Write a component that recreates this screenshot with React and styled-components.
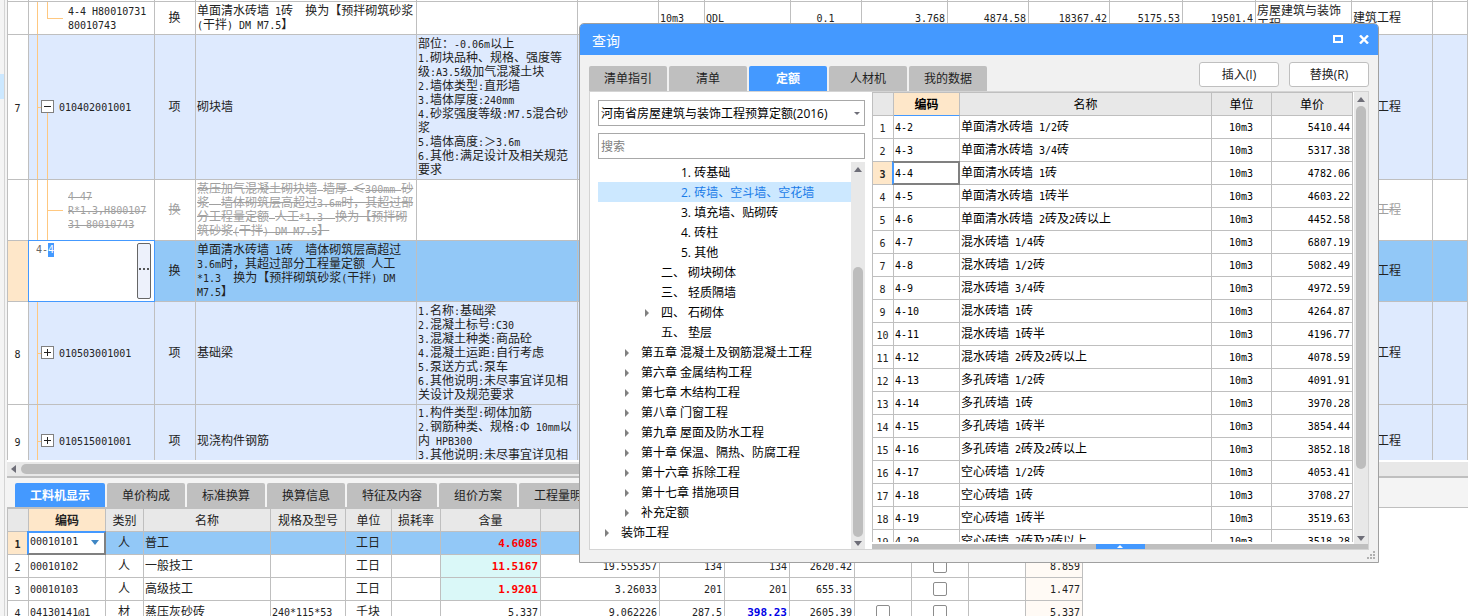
import React, { useLayoutEffect, useRef } from 'react';
import styled, { createGlobalStyle, css } from 'styled-components';

const c = {
  blue: '#4499ff',
  line: '#bfbfbf',
  pale: '#f4f4f4',
  track: '#e8e8e8',
  text: '#222222',
  peach: '#fee7c9',
  rowBlue: '#deeafe',
  rowActive: '#92c8f7',
};

const song = '"Noto Sans CJK SC", sans-serif';
const ui = '"Open Sans", "Noto Sans CJK SC", sans-serif';

const GlobalStyle = createGlobalStyle`
  * { box-sizing: border-box; }
  body { margin: 0; background: #fff; color: ${c.text}; font: 12px/14px ${song}; overflow: hidden; }
  button, input, select { font: inherit; color: inherit; }
`;

/* ---------- text: full-width characters with half-width monospaced Latin ---------- */

const Run = styled.span`
  text-decoration: ${(p) => (p.$struck ? 'line-through' : 'none')};
`;

const Latin = styled(Run)`
  font-family: "DejaVu Sans Mono", monospace;
  font-size: ${(p) => (p.$large ? 11 : 10)}px;
  line-height: 0;
`;

function Song({ children, large, struck }) {
  return String(children)
    .split(/([\x20-\x7e]+)/)
    .map((run, i) => {
      if (!run) return null;
      return i % 2
        ? <Latin key={i} $large={large} $struck={struck}>{run}</Latin>
        : <Run key={i} $struck={struck}>{run}</Run>;
    });
}

/* ---------- page frame ---------- */

const Page = styled.div`
  position: relative;
  display: flex;
  height: 100vh;
  overflow: hidden;
`;

const SideRail = styled.aside`
  flex: 0 0 7px;
  padding-top: 74px;
  background: linear-gradient(to right, ${c.pale} 4px, #d4d4d4 4px, #d4d4d4 5px, ${c.pale} 5px);
`;

const RailMark = styled.div`
  width: 4px;
  height: 25px;
  background: #cce8ff;
`;

const Main = styled.main`
  flex: 1;
  min-width: 0;
  display: flex;
  flex-direction: column;
`;

const UpperPane = styled.section`
  flex: 0 0 460px;
  overflow: hidden;
`;

const LowerPane = styled.section`
  flex: 1;
  min-height: 0;
  overflow: hidden;
`;

/* ---------- grids ---------- */

const Grid = styled.table`
  table-layout: fixed;
  width: ${(p) => p.$width || '100%'};
  border-collapse: separate;
  border-spacing: 0;
  border-left: 1px solid ${c.line};
  border-top: ${(p) => (p.$topLine ? `1px solid ${c.line}` : 0)};
  color: ${(p) => p.$ink || c.text};
`;

const Row = styled.tr`
  height: ${(p) => p.$h || 23}px;
  background: ${(p) => p.$bg || '#fff'};
`;

const Cell = styled.td`
  position: relative;
  padding: 0 2px 2px 1px;
  border-right: 1px solid ${c.line};
  border-bottom: 1px solid ${c.line};
  white-space: pre;
  overflow: hidden;
  text-align: ${(p) => p.$align || 'left'};
  vertical-align: ${(p) => p.$valign || 'middle'};
  color: ${(p) => p.$color || 'inherit'};
  font-weight: ${(p) => (p.$bold ? 700 : 400)};
  ${(p) => p.$bg && css`background: ${p.$bg};`}
`;

const EdgeCell = styled(Cell)`
  padding: 0;
`;

const HeadCell = styled.th`
  padding: 0;
  border-right: 1px solid ${c.line};
  border-bottom: 1px solid ${(p) => (p.$current ? c.blue : c.line)};
  background: ${(p) => (p.$current ? c.peach : c.track)};
  font-weight: ${(p) => (p.$current ? 700 : 400)};
  white-space: nowrap;
`;

const NumberCell = styled(Cell)`
  padding-bottom: 0;
  text-align: center;
  color: ${c.text};
  background: ${(p) => (p.$current ? c.peach : '#fff')};
  font-weight: ${(p) => (p.$current ? 700 : 400)};
`;

const FocusCell = styled(Cell)`
  background: #fff;
  overflow: visible;
  &::after {
    content: '';
    position: absolute;
    inset: -1px -1px -1px -2px;
    border: 2px solid #808080;
    border-left-color: ${c.blue};
    ${(p) => p.$blueTop && css`border-top-color: ${c.blue};`}
    pointer-events: none;
  }
`;

const Cols = ({ widths }) => (
  <colgroup>
    {widths.map((w, i) => <col key={i} style={w ? { width: w } : undefined} />)}
  </colgroup>
);

/* ---------- tree column of the upper grid ---------- */

const guide = (x, y, w, h) => `linear-gradient(#ffc880, #ffc880) ${x} ${y} / ${w} ${h} no-repeat`;
const guides = {
  last: [guide('8px', '0', '1px', '100%'), guide('18px', '0', '1px', '50%'), guide('18px', '50%', '16px', '1px')],
  child: [guide('8px', '0', '1px', '100%'), guide('18px', '0', '1px', '100%'), guide('18px', '50%', '16px', '1px')],
  open: [guide('8px', '0', '1px', '100%'), guide('18px', '100%', '1px', '50%'), guide('8px', '50%', '5px', '1px')],
  closed: [guide('8px', '0', '1px', '100%'), guide('8px', '50%', '5px', '1px')],
};

const TreeCell = styled(Cell)`
  padding-left: ${(p) => (p.$kind === 'open' || p.$kind === 'closed' ? 12 : 39)}px;
  background: ${(p) => guides[p.$kind].join(', ')};
`;

const NodeLine = styled.div`
  display: flex;
  align-items: center;
  gap: 5px;
`;

const Toggle = styled.button`
  display: grid;
  place-items: center;
  width: 13px;
  height: 13px;
  padding: 0;
  border: 1px solid #808080;
  background: #fff;
`;

const TreeToggle = ({ open }) => (
  <Toggle type="button" aria-label={open ? '折叠' : '展开'}>
    <svg width="7" height="7" viewBox="0 0 7 7" fill="#222" shapeRendering="crispEdges">
      <path d={open ? 'M0 3h7v1H0z' : 'M0 3h7v1H0zM3 0h1v7H3z'} />
    </svg>
  </Toggle>
);

const EditCell = styled(Cell)`
  padding: 0;
  background: #fff;
  overflow: visible;
  &::after {
    content: '';
    position: absolute;
    inset: -1px;
    border: 1px solid ${c.blue};
    pointer-events: none;
  }
`;

const EditLine = styled.div`
  display: flex;
  height: 56px;
  padding-right: 3px;
`;

const CodeInput = styled.input`
  flex: 1;
  min-width: 0;
  height: 14px;
  padding: 0 0 0 7px;
  border: 0;
  outline: 0;
  background: transparent;
  color: #666;
  caret-color: transparent;
  font: 10px/14px "DejaVu Sans Mono", monospace;
  &::selection { background: ${c.blue}; color: #fff; }
`;

const MoreButton = styled.button`
  display: grid;
  place-items: center;
  width: 14px;
  padding: 0 0 4px;
  border: 1px solid #666;
  border-radius: 2px;
  background: #edf1fb;
`;

function CodeEditor() {
  const ref = useRef(null);
  useLayoutEffect(() => {
    ref.current.focus();
    ref.current.setSelectionRange(2, 3);
  }, []);
  return (
    <EditLine>
      <CodeInput ref={ref} defaultValue="4-4" aria-label="编码" />
      <MoreButton type="button" aria-label="更多">
        <svg width="10" height="2" viewBox="0 0 10 2" fill="#555" shapeRendering="crispEdges">
          <path d="M0 0h2v2H0zM4 0h2v2H4zM8 0h2v2H8z" />
        </svg>
      </MoreButton>
    </EditLine>
  );
}

const upperCols = [21, 126, 41, 221, 161, 81, 46, 86, 71, 86, 81, 81, 73, 73, 96, 81, null];

const upperRows = [
  {
    h: 33, kind: 'last', code: '4-4 H80010731\n80010743', type: '换',
    name: '单面清水砖墙 1砖  换为【预拌砌筑砂浆\n(干拌) DM M7.5】',
    values: ['', '10m3', 'QDL', '0.1', '3.768', '4874.58', '18367.42', '5175.53', '19501.4', '房屋建筑与装饰\n工程'],
  },
  {
    h: 145, n: 7, kind: 'open', code: '010402001001', type: '项', name: '砌块墙', bg: c.rowBlue,
    detail: '部位：-0.06m以上\n1.砌块品种、规格、强度等\n级:A3.5级加气混凝土块\n2.墙体类型:直形墙\n3.墙体厚度:240mm\n4.砂浆强度等级:M7.5混合砂\n浆\n5.墙体高度:＞3.6m\n6.其他:满足设计及相关规范\n要求',
  },
  {
    h: 61, kind: 'child', code: '4-47\nR*1.3,H800107\n31 80010743', type: '换', struck: true,
    name: '蒸压加气混凝土砌块墙 墙厚 ≤300mm 砂\n浆  墙体砌筑层高超过3.6m时，其超过部\n分工程量定额 人工*1.3  换为【预拌砌\n筑砂浆(干拌) DM M7.5】',
  },
  {
    h: 61, editing: true, type: '换', bg: c.rowActive,
    name: '单面清水砖墙 1砖  墙体砌筑层高超过\n3.6m时，其超过部分工程量定额 人工\n*1.3  换为【预拌砌筑砂浆(干拌) DM\nM7.5】',
  },
  {
    h: 103, n: 8, kind: 'closed', code: '010503001001', type: '项', name: '基础梁', bg: c.rowBlue,
    detail: '1.名称:基础梁\n2.混凝土标号:C30\n3.混凝土种类:商品砼\n4.混凝土运距:自行考虑\n5.泵送方式:泵车\n6.其他说明:未尽事宜详见相\n关设计及规范要求',
  },
  {
    h: 73, n: 9, kind: 'closed', code: '010515001001', type: '项', name: '现浇构件钢筋', bg: c.rowBlue, top: true,
    detail: '1.构件类型:砌体加筋\n2.钢筋种类、规格:Φ 10mm以\n内 HPB300\n3.其他说明:未尽事宜详见相',
  },
];

const valueAlign = ['left', 'left', 'left', 'center', 'right', 'right', 'right', 'right', 'right', 'left'];

function UpperGrid() {
  return (
    <Grid>
      <Cols widths={upperCols} />
      <tbody>
        <Row $h={2}>{upperCols.map((_, i) => <EdgeCell key={i} />)}</Row>
        {upperRows.map((r, i) => {
          const color = r.struck ? '#a0a0a0' : undefined;
          return (
            <Row key={i} $h={r.h} $bg={r.bg}>
              <NumberCell $current={r.editing}><Song>{r.n ?? ''}</Song></NumberCell>
              {r.editing ? (
                <EditCell><CodeEditor /></EditCell>
              ) : (
                <TreeCell $kind={r.kind} $color={color}>
                  {r.n ? (
                    <NodeLine>
                      <TreeToggle open={r.kind === 'open'} />
                      <span><Song>{r.code}</Song></span>
                    </NodeLine>
                  ) : <Song struck={r.struck}>{r.code}</Song>}
                </TreeCell>
              )}
              <Cell $align="center" $color={color}><Song struck={r.struck}>{r.type}</Song></Cell>
              <Cell $color={color}><Song struck={r.struck}>{r.name}</Song></Cell>
              <Cell $valign={r.top ? 'top' : 'middle'}><Song>{r.detail ?? ''}</Song></Cell>
              {valueAlign.map((a, k) => (
                <Cell key={k} $align={a}><Song>{r.values?.[k] ?? ''}</Song></Cell>
              ))}
              <Cell $color={color}><Song struck={r.struck}>建筑工程</Song></Cell>
              <Cell />
            </Row>
          );
        })}
      </tbody>
    </Grid>
  );
}

/* ---------- scrollbars ---------- */

const Arrow = ({ dir, color = '#6e6e78' }) => {
  const d = { up: 'M0 5L4 0L8 5Z', down: 'M0 0H8L4 5Z', left: 'M5 0V8L0 4Z', right: 'M0 0V8L4 4Z' }[dir];
  const flat = dir === 'up' || dir === 'down';
  return <svg width={flat ? 8 : 5} height={flat ? 5 : 8} fill={color}><path d={d} /></svg>;
};

const HScroll = styled.div`
  display: flex;
  align-items: center;
  gap: 5px;
  flex: 0 0 18px;
  padding: 0 0 0 4px;
  border-top: 2px solid #fff;
  border-bottom: 2px solid ${c.line};
  background: ${c.track};
`;

const HThumb = styled.div`
  width: 1000px;
  height: 10px;
  border-radius: 5px;
  background: #bdbdbd;
`;

const VScroll = styled.div`
  display: flex;
  flex-direction: column;
  align-items: center;
  width: 14px;
  padding: 5px 0 3px;
  background: ${c.track};
`;

const VThumb = styled.div`
  width: 10px;
  height: ${(p) => p.$h}px;
  margin: ${(p) => (p.$end ? 'auto 0 4px' : '4px 0 auto')};
  border-radius: 5px;
  background: #bdbdbd;
`;

/* ---------- tabs ---------- */

const Tabs = styled.div`
  display: flex;
  gap: 2px;
  font-family: ${ui};
`;

const Tab = styled.button`
  height: ${(p) => p.$h || 24}px;
  min-width: 78px;
  padding: 1px 15px 0;
  border: 0;
  border-radius: 2px 2px 0 0;
  background: ${(p) => (p.$active ? c.blue : c.line)};
  color: ${(p) => (p.$active ? '#fff' : c.text)};
  font-weight: ${(p) => (p.$active ? 700 : 400)};
  white-space: nowrap;
`;

const LowerTabs = styled(Tabs)`
  padding: 5px 0 0 8px;
  border-bottom: 1px solid ${c.line};
  background: ${c.pale};
`;

/* ---------- lower grid ---------- */

const lowerCols = [21, 77, 38, 127, 75, 46, 49, 100, 119, 65, 65, 65, 57, 57, 57, 57];
const lowerHeads = ['', '编码', '类别', '名称', '规格及型号', '单位', '损耗率', '含量', '', '', '', '', '', '', '', ''];

const lowerRows = [
  { code: '00010101', kind: '人', name: '普工', unit: '工日', qty: '4.6085', hot: true },
  { code: '00010102', kind: '人', name: '一般技工', unit: '工日', qty: '11.5167', hot: true, nums: ['19.555357', '134', '134', '2620.42'], checks: [false, true], total: '8.859' },
  { code: '00010103', kind: '人', name: '高级技工', unit: '工日', qty: '1.9201', hot: true, nums: ['3.26033', '201', '201', '655.33'], checks: [false, true], total: '1.477' },
  { code: '04130141@1', kind: '材', name: '蒸压灰砂砖', spec: '240*115*53', unit: '千块', qty: '5.337', nums: ['9.062226', '287.5', '398.23', '2605.39'], checks: [true, true], total: '5.337', market: true },
];

const CodeSelectBox = styled.label`
  display: flex;
  align-items: center;
  padding-right: 4px;
`;

const CodeSelect = styled.select`
  appearance: none;
  flex: 1;
  min-width: 0;
  height: 18px;
  padding: 0;
  border: 0;
  background: transparent;
  font: 10px/18px "DejaVu Sans Mono", monospace;
`;

const Check = styled.input`
  appearance: none;
  display: block;
  width: 14px;
  height: 14px;
  margin: 0 auto;
  border: 1px solid #8c8c8c;
  border-radius: 2px;
  background: #fff;
`;

function LowerGrid() {
  return (
    <Grid $width="1076px" $topLine>
      <Cols widths={lowerCols} />
      <thead>
        <Row>{lowerHeads.map((h, i) => <HeadCell key={i} $current={i === 1}>{h}</HeadCell>)}</Row>
      </thead>
      <tbody>
        {lowerRows.map((r, i) => {
          const active = i === 0;
          return (
            <Row key={r.code} $bg={active ? c.rowActive : undefined}>
              <NumberCell $current={active}><Song>{i + 1}</Song></NumberCell>
              {active ? (
                <FocusCell $blueTop>
                  <CodeSelectBox>
                    <CodeSelect aria-label="编码"><option>{r.code}</option></CodeSelect>
                    <Arrow dir="down" color="#3f86c4" />
                  </CodeSelectBox>
                </FocusCell>
              ) : <Cell><Song>{r.code}</Song></Cell>}
              <Cell $align="center">{r.kind}</Cell>
              <Cell>{r.name}</Cell>
              <Cell><Song>{r.spec ?? ''}</Song></Cell>
              <Cell $align="center">{r.unit}</Cell>
              <Cell />
              <Cell $align="right" $bold={r.hot} $color={r.hot ? '#ff0000' : undefined} $bg={r.hot && !active ? '#daf8f8' : undefined}>
                <Song large={r.hot}>{r.qty}</Song>
              </Cell>
              {[0, 1, 2, 3].map((k) => {
                const market = r.market && k === 2;
                return (
                  <Cell key={k} $align="right" $bold={market} $color={market ? '#0000e6' : undefined}>
                    <Song large={market}>{r.nums?.[k] ?? ''}</Song>
                  </Cell>
                );
              })}
              {[0, 1].map((k) => (
                <EdgeCell key={k}>{r.checks?.[k] && <Check type="checkbox" aria-label={`${r.name} 选项${k + 1}`} />}</EdgeCell>
              ))}
              <Cell />
              <Cell $align="right" $bg="#fffaf5"><Song>{r.total ?? ''}</Song></Cell>
            </Row>
          );
        })}
      </tbody>
    </Grid>
  );
}

/* ---------- query dialog ---------- */

const Dialog = styled.section`
  position: absolute;
  left: 579px;
  top: 23px;
  display: flex;
  flex-direction: column;
  width: 800px;
  height: 540px;
  border: 1px solid #a0a0a0;
  border-radius: 5px 5px 0 0;
  background: #f1f1f1;
  overflow: hidden;
  font-family: ${ui};
`;

const TitleBar = styled.header`
  display: flex;
  align-items: center;
  flex: 0 0 31px;
  padding: 0 1px 0 12px;
  background: ${c.blue};
  color: #fff;
`;

const Title = styled.h1`
  flex: 1;
  margin: 0;
  padding-top: 2px;
  font: 400 14px/20px ${ui};
`;

const WindowButton = styled.button`
  display: grid;
  place-items: center;
  width: 26px;
  height: 30px;
  padding: 0 0 1px;
  border: 0;
  background: transparent;
`;

const WindowButtons = styled.div`
  display: flex;
`;

const ToolRow = styled.div`
  display: flex;
  justify-content: space-between;
  align-items: flex-end;
  flex: 0 0 36px;
  padding: 0 9px;
`;

const Actions = styled.div`
  display: flex;
  gap: 10px;
  padding-bottom: 4px;
`;

const ActionButton = styled.button`
  width: 80px;
  height: 25px;
  padding: 1px 0 0;
  border: 1px solid ${c.line};
  border-radius: 3px;
  background: #fff;
`;

const Panel = styled.div`
  flex: 1;
  min-height: 0;
  display: flex;
  gap: 7px;
  margin: 0 9px 12px;
  border: 1px solid #d4d4d4;
  background: #fff;
`;

const BrowsePane = styled.div`
  flex: 0 0 275px;
  display: flex;
  flex-direction: column;
  padding: 8px 0 0 8px;
`;

const Field = styled.div`
  display: flex;
  align-items: center;
  flex: 0 0 26px;
  margin-bottom: 7px;
  padding: 1px 4px 0 2px;
  border: 1px solid #a8a8a8;
  color: #000;
`;

const SearchField = styled(Field)`
  margin-bottom: 3px;
`;

const LibrarySelect = styled.select`
  appearance: none;
  flex: 1;
  height: 22px;
  padding: 0;
  border: 0;
  background: transparent;
`;

const SearchInput = styled.input`
  flex: 1;
  padding: 0;
  border: 0;
  outline: 0;
  background: transparent;
  &::placeholder { color: #808080; opacity: 1; }
`;

const TreeArea = styled.div`
  flex: 1;
  min-height: 0;
  display: flex;
`;

const Tree = styled.ul`
  flex: 1;
  margin: 0;
  padding: 0;
  list-style: none;
  color: #000;
`;

const TreeItem = styled.li`
  display: flex;
  align-items: center;
  height: 20px;
  padding: 2px 0 0 ${(p) => 7 + p.$level * 20}px;
  background: ${(p) => (p.$active ? '#cce8ff' : 'transparent')};
  color: ${(p) => (p.$active ? '#1a7be8' : 'inherit')};
  white-space: pre;
`;

const ArrowSlot = styled.span`
  display: flex;
  width: 16px;
`;

const tree = [
  [3, '1. 砖基础'],
  [3, '2. 砖墙、空斗墙、空花墙'],
  [3, '3. 填充墙、贴砌砖'],
  [3, '4. 砖柱'],
  [3, '5. 其他'],
  [2, '二、 砌块砌体'],
  [2, '三、 轻质隔墙'],
  [2, '四、 石砌体', true],
  [2, '五、 垫层'],
  [1, '第五章 混凝土及钢筋混凝土工程', true],
  [1, '第六章 金属结构工程', true],
  [1, '第七章 木结构工程', true],
  [1, '第八章 门窗工程', true],
  [1, '第九章 屋面及防水工程', true],
  [1, '第十章 保温、隔热、防腐工程', true],
  [1, '第十六章 拆除工程', true],
  [1, '第十七章 措施项目', true],
  [1, '补充定额', true],
  [0, '装饰工程', true],
];

const ResultPane = styled.div`
  flex: 1;
  min-width: 0;
  display: flex;
  flex-direction: column;
`;

const ResultArea = styled.div`
  flex: 1;
  min-height: 0;
  display: flex;
  gap: 1px;
  font-family: ${song};
`;

const ResultScroll = styled.div`
  flex: 1;
  overflow: hidden;
  border-bottom: 2px solid #fff;
`;

const Drawer = styled.div`
  flex: 0 0 5px;
  display: flex;
  justify-content: center;
  background: ${c.line};
`;

const DrawerHandle = styled.button`
  display: grid;
  place-items: center;
  width: 49px;
  height: 5px;
  padding: 0;
  border: 0;
  background: ${c.blue};
`;

const Grip = styled.svg`
  position: absolute;
  right: 3px;
  bottom: 3px;
`;

const results = [
  ['4-2', '单面清水砖墙 1/2砖', '5410.44'],
  ['4-3', '单面清水砖墙 3/4砖', '5317.38'],
  ['4-4', '单面清水砖墙 1砖', '4782.06'],
  ['4-5', '单面清水砖墙 1砖半', '4603.22'],
  ['4-6', '单面清水砖墙 2砖及2砖以上', '4452.58'],
  ['4-7', '混水砖墙 1/4砖', '6807.19'],
  ['4-8', '混水砖墙 1/2砖', '5082.49'],
  ['4-9', '混水砖墙 3/4砖', '4972.59'],
  ['4-10', '混水砖墙 1砖', '4264.87'],
  ['4-11', '混水砖墙 1砖半', '4196.77'],
  ['4-12', '混水砖墙 2砖及2砖以上', '4078.59'],
  ['4-13', '多孔砖墙 1/2砖', '4091.91'],
  ['4-14', '多孔砖墙 1砖', '3970.28'],
  ['4-15', '多孔砖墙 1砖半', '3854.44'],
  ['4-16', '多孔砖墙 2砖及2砖以上', '3852.18'],
  ['4-17', '空心砖墙 1/2砖', '4053.41'],
  ['4-18', '空心砖墙 1砖', '3708.27'],
  ['4-19', '空心砖墙 1砖半', '3519.63'],
  ['4-20', '空心砖墙 2砖及2砖以上', '3518.28'],
];

function ResultGrid() {
  return (
    <Grid $topLine $ink="#000">
      <Cols widths={[21, 66, null, 60, 81]} />
      <thead>
        <Row>
          {['', '编码', '名称', '单位', '单价'].map((h, i) => (
            <HeadCell key={i} $current={i === 1}>{h}</HeadCell>
          ))}
        </Row>
      </thead>
      <tbody>
        {results.map(([code, name, price], i) => {
          const current = i === 2;
          const CodeCell = current ? FocusCell : Cell;
          return (
            <Row key={code}>
              <NumberCell $current={current}><Song>{i + 1}</Song></NumberCell>
              <CodeCell><Song>{code}</Song></CodeCell>
              <Cell><Song>{name}</Song></Cell>
              <Cell $align="center"><Song>10m3</Song></Cell>
              <Cell $align="right"><Song>{price}</Song></Cell>
            </Row>
          );
        })}
      </tbody>
    </Grid>
  );
}

function QueryDialog() {
  return (
    <Dialog role="dialog" aria-label="查询">
      <TitleBar>
        <Title>查询</Title>
        <WindowButtons>
          <WindowButton type="button" aria-label="最大化">
            <svg width="10" height="8" fill="none" stroke="#fff" strokeWidth="2" shapeRendering="crispEdges">
              <path d="M1 1H9V7H1Z" />
            </svg>
          </WindowButton>
          <WindowButton type="button" aria-label="关闭">
            <svg width="10" height="9" fill="none" stroke="#fff" strokeWidth="2.4">
              <path d="M1 0.5L9 8.5M9 0.5L1 8.5" />
            </svg>
          </WindowButton>
        </WindowButtons>
      </TitleBar>
      <ToolRow>
        <Tabs>
          {['清单指引', '清单', '定额', '人材机', '我的数据'].map((t) => (
            <Tab key={t} type="button" $h={25} $active={t === '定额'}>{t}</Tab>
          ))}
        </Tabs>
        <Actions>
          <ActionButton type="button">插入(I)</ActionButton>
          <ActionButton type="button">替换(R)</ActionButton>
        </Actions>
      </ToolRow>
      <Panel>
        <BrowsePane>
          <Field>
            <LibrarySelect aria-label="定额库">
              <option>河南省房屋建筑与装饰工程预算定额(2016)</option>
            </LibrarySelect>
            <svg width="6" height="3" fill="#6e6e78"><path d="M0 0H6L3 3Z" /></svg>
          </Field>
          <SearchField>
            <SearchInput type="text" placeholder="搜索" aria-label="搜索" />
          </SearchField>
          <TreeArea>
            <Tree>
              {tree.map(([level, label, more]) => (
                <TreeItem key={label} $level={level} $active={label.startsWith('2.')}>
                  <ArrowSlot>{more && <Arrow dir="right" color="#808080" />}</ArrowSlot>
                  {label}
                </TreeItem>
              ))}
            </Tree>
            <VScroll>
              <Arrow dir="up" />
              <VThumb $h={270} $end />
              <Arrow dir="down" />
            </VScroll>
          </TreeArea>
        </BrowsePane>
        <ResultPane>
          <ResultArea>
            <ResultScroll><ResultGrid /></ResultScroll>
            <VScroll>
              <Arrow dir="up" />
              <VThumb $h={363} />
              <Arrow dir="down" />
            </VScroll>
          </ResultArea>
          <Drawer>
            <DrawerHandle type="button" aria-label="展开明细">
              <svg width="6" height="3" fill="#fff"><path d="M0 3L3 0L6 3Z" /></svg>
            </DrawerHandle>
          </Drawer>
        </ResultPane>
      </Panel>
      <Grip width="8" height="8" fill="#b0b0b0" shapeRendering="crispEdges">
        <path d="M6 0h2v2H6zM3 3h2v2H3zM6 3h2v2H6zM0 6h2v2H0zM3 6h2v2H3zM6 6h2v2H6z" />
      </Grip>
    </Dialog>
  );
}

/* ---------- app ---------- */

export default function App() {
  return (
    <>
      <GlobalStyle />
      <Page>
        <SideRail><RailMark /></SideRail>
        <Main>
          <UpperPane><UpperGrid /></UpperPane>
          <HScroll>
            <Arrow dir="left" />
            <HThumb />
          </HScroll>
          <LowerPane>
            <LowerTabs>
              {['工料机显示', '单价构成', '标准换算', '换算信息', '特征及内容', '组价方案', '工程量明细'].map((t, i) => (
                <Tab key={t} type="button" $active={i === 0}>{t}</Tab>
              ))}
            </LowerTabs>
            <LowerGrid />
          </LowerPane>
        </Main>
        <QueryDialog />
      </Page>
    </>
  );
}
